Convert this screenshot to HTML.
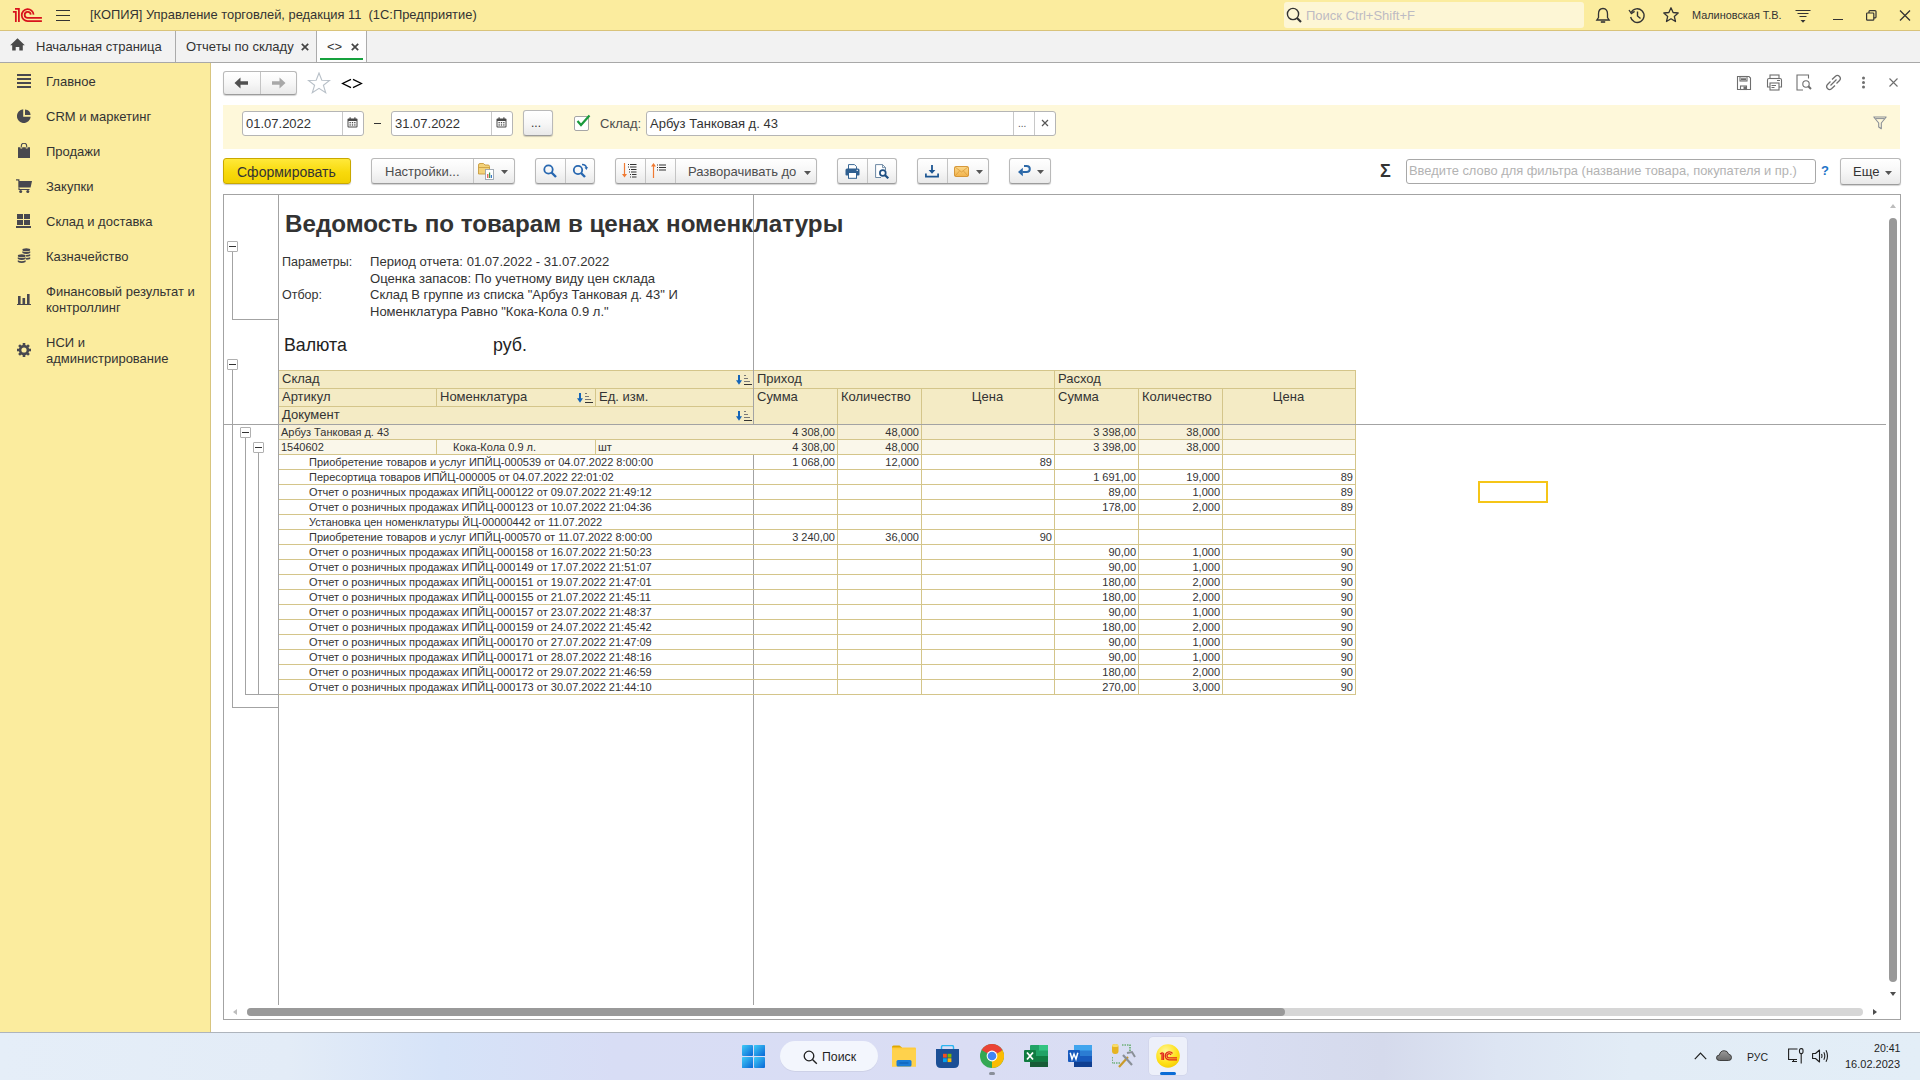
<!DOCTYPE html>
<html><head><meta charset="utf-8">
<style>
*{box-sizing:border-box;margin:0;padding:0}
html,body{width:1920px;height:1080px;overflow:hidden;background:#fff}
body{position:relative;font-family:"Liberation Sans",sans-serif;color:#333;font-size:13px}
.a{position:absolute}
.t{position:absolute;white-space:nowrap;line-height:1}

.btn{position:absolute;border:1px solid #B9B9B9;border-bottom-color:#9C9C9C;border-radius:3px;background:linear-gradient(#FFFFFF 0%,#F7F7F7 50%,#E9E9E9 100%);box-shadow:0 1px 1px rgba(0,0,0,0.18)}
.dv{position:absolute;width:1px;background:#C4C4C4}
.inp{position:absolute;border:1px solid #B5B5B5;border-radius:3px;background:#fff}
</style></head><body>

<!-- title bar -->
<div class="a" style="left:0;top:0;width:1920px;height:30px;background:#FBEC9E"></div>
<div class="a" style="left:0;top:30px;width:1920px;height:1px;background:#D9C37A"></div>
<!-- tabs bar -->
<div class="a" style="left:0;top:31px;width:1920px;height:31px;background:#F2F2F2"></div>
<div class="a" style="left:0;top:62px;width:1920px;height:1px;background:#A8A8A8"></div>
<!-- sidebar -->
<div class="a" style="left:0;top:63px;width:210px;height:969px;background:#FBEC9E"></div>
<div class="a" style="left:210px;top:63px;width:1px;height:969px;background:#D8C57F"></div>
<!-- taskbar -->
<div class="a" style="left:0;top:1032px;width:1920px;height:1px;background:#AEB4BC"></div>
<div class="a" style="left:0;top:1033px;width:1920px;height:47px;background:linear-gradient(90deg,#E5EEF8 0%,#E3ECF7 15%,#D6E3F8 23%,#D8DDF5 32%,#DADDF4 50%,#D9DEF3 63%,#D5DAEC 72%,#DDE5F3 78%,#E2ECF6 85%,#E3EEF7 100%)"></div>


<!-- title bar content -->
<svg class="a" style="left:8px;top:2px" width="40" height="26" viewBox="8 2 40 26"><g fill="none" stroke="#D8121C" stroke-width="1.75" stroke-linecap="butt"><path d="M12.9 11.95 H15.85 V22"/><path d="M15 8.75 H18.9 V22"/><path d="M33.6 14.6 A5.95 5.95 0 1 0 27.7 21.05 H41.9"/><path d="M30.75 14.6 A3.05 3.05 0 1 0 27.7 17.95 H41.9"/></g></svg>
<div class="a" style="left:56px;top:10px;width:14px;height:1.4px;background:#333"></div>
<div class="a" style="left:56px;top:15px;width:14px;height:1.4px;background:#333"></div>
<div class="a" style="left:56px;top:20px;width:14px;height:1.4px;background:#333"></div>
<div class="t" style="left:90px;top:9px;font-size:12.9px;color:#333">[КОПИЯ] Управление торговлей, редакция 11&nbsp; (1С:Предприятие)</div>
<div class="a" style="left:1284px;top:2px;width:300px;height:26px;background:#FDF6D5;border-radius:3px"></div>
<svg class="a" style="left:1286px;top:7px" width="17" height="17" viewBox="0 0 17 17"><circle cx="7" cy="7" r="5.6" fill="none" stroke="#333" stroke-width="1.4"/><path d="M11 11 L15 15" stroke="#333" stroke-width="2.2"/></svg>
<div class="t" style="left:1306px;top:9px;font-size:13px;color:#BDBBC3">Поиск Ctrl+Shift+F</div>
<svg class="a" style="left:1595px;top:7px" width="16" height="17" viewBox="0 0 16 17"><path d="M8 1.5 C4.8 1.5 3.5 4 3.5 7 V10.5 L1.8 13 H14.2 L12.5 10.5 V7 C12.5 4 11.2 1.5 8 1.5 Z" fill="none" stroke="#333" stroke-width="1.3"/><path d="M5.8 15 H10.2" stroke="#333" stroke-width="1.6"/></svg>
<svg class="a" style="left:1628px;top:7px" width="18" height="17" viewBox="0 0 18 17"><path d="M3.2 5.5 A6.8 6.8 0 1 1 2.6 10" fill="none" stroke="#333" stroke-width="1.4"/><path d="M1 3 L3.4 6.6 L6.6 4.4" fill="none" stroke="#333" stroke-width="1.3"/><path d="M9.5 4.5 V9 L12.5 11.5" fill="none" stroke="#333" stroke-width="1.4"/></svg>
<svg class="a" style="left:1662px;top:6px" width="18" height="18" viewBox="0 0 18 18"><path d="M9 1.8 L11.1 6.5 L16.2 7 L12.3 10.4 L13.5 15.5 L9 12.8 L4.5 15.5 L5.7 10.4 L1.8 7 L6.9 6.5 Z" fill="none" stroke="#333" stroke-width="1.3" stroke-linejoin="round"/></svg>
<div class="t" style="left:1692px;top:10px;font-size:10.9px;color:#333">Малиновская Т.В.</div>
<svg class="a" style="left:1795px;top:8px" width="16" height="16" viewBox="0 0 16 16"><path d="M0.5 2.5 H15.5 M2.5 5.5 H13.5 M4.5 8.5 H11.5" stroke="#333" stroke-width="1.2"/><path d="M5.5 12 H10.5 L8 14.8 Z" fill="#333"/></svg>
<div class="a" style="left:1833px;top:19px;width:10px;height:1.3px;background:#333"></div>
<svg class="a" style="left:1866px;top:10px" width="11" height="11" viewBox="0 0 11 11"><rect x="0.6" y="3" width="7.2" height="7.2" fill="none" stroke="#333" stroke-width="1.2" rx="0.8"/><path d="M3 3 V1.5 Q3 0.6 3.9 0.6 H9 Q10 0.6 10 1.6 V7 Q10 7.8 9.2 7.8 H7.8" fill="none" stroke="#333" stroke-width="1.2"/></svg>
<svg class="a" style="left:1899px;top:10px" width="12" height="11" viewBox="0 0 12 11"><path d="M1 0.5 L11 10.5 M11 0.5 L1 10.5" stroke="#333" stroke-width="1.3"/></svg>

<!-- tabs -->
<svg class="a" style="left:10px;top:38px" width="15" height="13" viewBox="0 0 15 13"><path d="M7.5 0.3 L14.8 7.2 H12.8 V12.6 H9.3 V9 H5.7 V12.6 H2.2 V7.2 H0.2 Z" fill="#4A4A4A"/></svg>
<div class="t" style="left:36px;top:40px;font-size:13px;color:#333">Начальная страница</div>
<div class="a" style="left:175px;top:31px;width:1px;height:31px;background:#ABABAB"></div>
<div class="t" style="left:186px;top:40px;font-size:13px;color:#333">Отчеты по складу</div>
<svg class="a" style="left:301px;top:43px" width="8" height="8" viewBox="0 0 8 8"><path d="M0.8 0.8 L7.2 7.2 M7.2 0.8 L0.8 7.2" stroke="#444" stroke-width="1.7"/></svg>
<div class="a" style="left:316px;top:31px;width:1px;height:31px;background:#ABABAB"></div>
<div class="a" style="left:317px;top:31px;width:49px;height:31px;background:#FDFDFD"></div>
<div class="t" style="left:327px;top:40px;font-size:13px;color:#333">&lt;&gt;</div>
<svg class="a" style="left:351px;top:43px" width="8" height="8" viewBox="0 0 8 8"><path d="M0.8 0.8 L7.2 7.2 M7.2 0.8 L0.8 7.2" stroke="#444" stroke-width="1.7"/></svg>
<div class="a" style="left:320px;top:58px;width:43px;height:2px;background:#14A03C"></div>
<div class="a" style="left:366px;top:31px;width:1px;height:31px;background:#ABABAB"></div>

<!-- sidebar -->
<div class="t" style="left:46px;top:75px;font-size:13px;color:#333">Главное</div>
<div class="t" style="left:46px;top:110px;font-size:13px;color:#333">CRM и маркетинг</div>
<div class="t" style="left:46px;top:145px;font-size:13px;color:#333">Продажи</div>
<div class="t" style="left:46px;top:180px;font-size:13px;color:#333">Закупки</div>
<div class="t" style="left:46px;top:215px;font-size:13px;color:#333">Склад и доставка</div>
<div class="t" style="left:46px;top:250px;font-size:13px;color:#333">Казначейство</div>
<div class="t" style="left:46px;top:284px;font-size:13px;color:#333;line-height:15.5px">Финансовый результат и<br>контроллинг</div>
<div class="t" style="left:46px;top:335px;font-size:13px;color:#333;line-height:15.5px">НСИ и<br>администрирование</div>


<!-- sidebar icons -->
<svg class="a" style="left:17px;top:74px" width="14" height="14" viewBox="0 0 14 14"><g fill="#48484F"><rect x="0" y="0" width="14" height="2"/><rect x="0" y="4" width="14" height="2"/><rect x="0" y="8" width="14" height="2"/><rect x="0" y="12" width="14" height="2"/></g></svg>
<svg class="a" style="left:17px;top:109px" width="14" height="14" viewBox="0 0 14 14"><path d="M6.2 0.3 V7.8 H13.7 A6.9 6.9 0 1 1 6.2 0.3 Z" fill="#48484F"/><path d="M8 0.4 A6 6 0 0 1 13.6 6 H8 Z" fill="#48484F"/></svg>
<svg class="a" style="left:18px;top:143px" width="12" height="15" viewBox="0 0 12 15"><path d="M3.3 4.5 V3 A2.7 2.7 0 0 1 8.7 3 V4.5" fill="none" stroke="#48484F" stroke-width="1.1"/><path d="M0 4.3 H2.4 V5.6 H4.2 V4.3 H7.8 V5.6 H9.6 V4.3 H12 V15 H0 Z" fill="#48484F"/></svg>
<svg class="a" style="left:16px;top:179px" width="16" height="14" viewBox="0 0 16 14"><path d="M0 0.8 H2.8 L2.8 2" stroke="#48484F" stroke-width="1.3" fill="none"/><path d="M2.3 2 H16 L14.6 8.5 H2.3 Z" fill="#48484F"/><path d="M3 8.5 V10.5 H13.5" stroke="#48484F" stroke-width="1.1" fill="none"/><circle cx="4.7" cy="12.4" r="1.5" fill="#48484F"/><circle cx="11.8" cy="12.4" r="1.5" fill="#48484F"/></svg>
<svg class="a" style="left:16px;top:214px" width="15" height="14" viewBox="0 0 15 14"><g fill="#48484F"><rect x="1" y="0" width="6" height="5"/><rect x="8" y="0" width="6" height="5"/><rect x="1" y="6" width="6" height="5"/><rect x="8" y="6" width="6" height="5"/><rect x="0" y="12" width="15" height="2"/></g></svg>
<svg class="a" style="left:17px;top:248px" width="14" height="16" viewBox="0 0 14 16"><g fill="#48484F"><ellipse cx="9.3" cy="1.8" rx="3.9" ry="1.5"/><path d="M5.4 3.2 Q9.3 5 13.2 3.2 V5 Q9.3 6.8 5.4 5 Z"/><path d="M9 7 Q11.5 7 13.2 6.2 V7.9 Q11.5 8.7 9.2 8.7 Z"/><path d="M9 10 Q11.5 10 13.2 9.2 V10.9 Q11.5 11.7 9.2 11.7 Z"/><ellipse cx="4.7" cy="7.8" rx="3.9" ry="1.5"/><path d="M0.8 9.2 Q4.7 11 8.6 9.2 V11 Q4.7 12.8 0.8 11 Z"/><path d="M0.8 12.3 Q4.7 14.1 8.6 12.3 V14 Q4.7 15.8 0.8 14 Z"/></g></svg>
<svg class="a" style="left:17px;top:294px" width="14" height="11" viewBox="0 0 14 11"><g fill="#48484F"><rect x="1" y="2" width="2.6" height="8"/><rect x="5.5" y="4" width="2.6" height="6"/><rect x="10" y="0" width="2.6" height="10"/><rect x="0" y="10" width="14" height="1"/></g></svg>
<svg class="a" style="left:17px;top:343px" width="14" height="14" viewBox="0 0 14 14"><g transform="translate(7 7)" fill="#48484F"><circle r="5.2"/><rect x="-1.3" y="-7" width="2.6" height="3"/><rect x="-1.3" y="-7" width="2.6" height="3" transform="rotate(45)"/><rect x="-1.3" y="-7" width="2.6" height="3" transform="rotate(90)"/><rect x="-1.3" y="-7" width="2.6" height="3" transform="rotate(135)"/><rect x="-1.3" y="-7" width="2.6" height="3" transform="rotate(180)"/><rect x="-1.3" y="-7" width="2.6" height="3" transform="rotate(225)"/><rect x="-1.3" y="-7" width="2.6" height="3" transform="rotate(270)"/><rect x="-1.3" y="-7" width="2.6" height="3" transform="rotate(315)"/><circle r="2.6" fill="#FBEC9E"/></g></svg>

<!-- main content -->


<!-- nav row -->
<div class="btn" style="left:223px;top:71px;width:74px;height:24px"></div>
<div class="dv" style="left:260px;top:72px;height:22px"></div>
<svg class="a" style="left:234px;top:77px" width="15" height="12" viewBox="0 0 15 12"><path d="M0.5 6 L6.5 0.5 V4.3 H14 V7.7 H6.5 V11.5 Z" fill="#505050"/></svg>
<svg class="a" style="left:271px;top:77px" width="15" height="12" viewBox="0 0 15 12"><path d="M14.5 6 L8.5 0.5 V4.3 H1 V7.7 H8.5 V11.5 Z" fill="#A8A8A8"/></svg>
<svg class="a" style="left:307px;top:72px" width="24" height="23" viewBox="0 0 24 23"><path d="M12 1 L14.8 8.2 L22.6 8.4 L16.4 13.2 L18.7 20.8 L12 16.4 L5.3 20.8 L7.6 13.2 L1.4 8.4 L9.2 8.2 Z" fill="none" stroke="#B8C0C8" stroke-width="1.1" stroke-linejoin="miter"/></svg>
<svg class="a" style="left:341px;top:78px" width="22" height="11" viewBox="0 0 22 11"><path d="M10 1.4 L1.6 5.5 L10 9.6 M12 1.4 L20.4 5.5 L12 9.6" fill="none" stroke="#000" stroke-width="1.3"/></svg>
<!-- right icons -->
<svg class="a" style="left:1736px;top:75px" width="16" height="16" viewBox="0 0 16 16"><g fill="none" stroke="#6E6E6E" stroke-width="1.1"><path d="M1.5 1.5 H13 L14.5 3 V14.5 H1.5 Z"/><rect x="4" y="1.5" width="7" height="4.5"/><path d="M5 3.2 H10 M5 4.6 H10"/><rect x="4.5" y="11" width="6" height="3.5"/></g><rect x="7.5" y="11.5" width="3" height="3" fill="#6E6E6E"/></svg>
<svg class="a" style="left:1766px;top:74px" width="17" height="17" viewBox="0 0 17 17"><g fill="none" stroke="#6E6E6E" stroke-width="1.1"><rect x="4" y="1" width="9" height="3.5"/><path d="M4 13 H1.5 V6 Q1.5 4.5 3 4.5 H14 Q15.5 4.5 15.5 6 V13 H13"/><rect x="4" y="9" width="9" height="7"/><path d="M5.5 11.5 H10 M5.5 13.5 H8.5 M11 6.5 H14"/></g></svg>
<svg class="a" style="left:1796px;top:74px" width="16" height="17" viewBox="0 0 16 17"><g fill="none" stroke="#6E6E6E" stroke-width="1.1"><path d="M12.5 4.5 V1 H1 V16 H7"/><circle cx="10" cy="10" r="3.2"/></g><path d="M12.3 12.3 L15 15" stroke="#6E6E6E" stroke-width="2"/></svg>
<svg class="a" style="left:1825px;top:74px" width="17" height="17" viewBox="0 0 17 17"><g fill="none" stroke="#6E6E6E" stroke-width="1.3"><path d="M7 5.5 L10.5 2.2 Q12.5 0.5 14.5 2.5 Q16.3 4.5 14.5 6.5 L11.5 9.5"/><path d="M10 11.5 L6.5 14.8 Q4.5 16.5 2.5 14.5 Q0.7 12.5 2.5 10.5 L5.5 7.5"/><path d="M5.5 11.5 L11.5 5.5"/></g></svg>
<svg class="a" style="left:1861px;top:76px" width="5" height="13" viewBox="0 0 5 13"><circle cx="2.5" cy="2" r="1.5" fill="#6E6E6E"/><circle cx="2.5" cy="6.5" r="1.5" fill="#6E6E6E"/><circle cx="2.5" cy="11" r="1.5" fill="#6E6E6E"/></svg>
<svg class="a" style="left:1889px;top:78px" width="9" height="9" viewBox="0 0 9 9"><path d="M0.5 0.5 L8.5 8.5 M8.5 0.5 L0.5 8.5" stroke="#6E6E6E" stroke-width="1.1"/></svg>

<!-- filter panel -->
<div class="a" style="left:223px;top:105px;width:1677px;height:44px;background:#FEF8DA"></div>
<div class="inp" style="left:242px;top:111px;width:122px;height:25px"></div>
<div class="a" style="left:342px;top:112px;width:1px;height:23px;background:#C8C8C8"></div>
<div class="t" style="left:246px;top:117px;font-size:13px;color:#333">01.07.2022</div>
<svg class="a" style="left:347px;top:117px" width="11" height="11" viewBox="0 0 11 11"><rect x="0.5" y="1.5" width="10" height="9" rx="1" fill="#4A4A4A"/><rect x="1.5" y="4" width="8" height="5.5" fill="#fff"/><g fill="#4A4A4A"><rect x="2.5" y="5" width="1.3" height="1.3"/><rect x="4.85" y="5" width="1.3" height="1.3"/><rect x="7.2" y="5" width="1.3" height="1.3"/><rect x="2.5" y="7.3" width="1.3" height="1.3"/><rect x="4.85" y="7.3" width="1.3" height="1.3"/><rect x="7.2" y="7.3" width="1.3" height="1.3"/></g><rect x="2.5" y="0.3" width="1.2" height="2.2" fill="#4A4A4A"/><rect x="7.3" y="0.3" width="1.2" height="2.2" fill="#4A4A4A"/></svg>
<div class="a" style="left:374px;top:123px;width:7px;height:1px;background:#333"></div>
<div class="inp" style="left:391px;top:111px;width:122px;height:25px"></div>
<div class="a" style="left:491px;top:112px;width:1px;height:23px;background:#C8C8C8"></div>
<div class="t" style="left:395px;top:117px;font-size:13px;color:#333">31.07.2022</div>
<svg class="a" style="left:496px;top:117px" width="11" height="11" viewBox="0 0 11 11"><rect x="0.5" y="1.5" width="10" height="9" rx="1" fill="#4A4A4A"/><rect x="1.5" y="4" width="8" height="5.5" fill="#fff"/><g fill="#4A4A4A"><rect x="2.5" y="5" width="1.3" height="1.3"/><rect x="4.85" y="5" width="1.3" height="1.3"/><rect x="7.2" y="5" width="1.3" height="1.3"/><rect x="2.5" y="7.3" width="1.3" height="1.3"/><rect x="4.85" y="7.3" width="1.3" height="1.3"/><rect x="7.2" y="7.3" width="1.3" height="1.3"/></g><rect x="2.5" y="0.3" width="1.2" height="2.2" fill="#4A4A4A"/><rect x="7.3" y="0.3" width="1.2" height="2.2" fill="#4A4A4A"/></svg>
<div class="btn" style="left:523px;top:110px;width:30px;height:26px"></div>
<div class="t" style="left:531px;top:117px;font-size:12px;color:#333">...</div>
<div class="a" style="left:574px;top:116px;width:15px;height:15px;border:1px solid #A6A6A6;border-radius:2px;background:#fff"></div>
<svg class="a" style="left:575px;top:114px" width="16" height="14" viewBox="0 0 16 14"><path d="M2.5 7 L6 11 L14.5 1.5" fill="none" stroke="#1A9A3C" stroke-width="2.2"/></svg>
<div class="t" style="left:600px;top:117px;font-size:13px;color:#4D4D4D">Склад:</div>
<div class="inp" style="left:646px;top:111px;width:410px;height:25px"></div>
<div class="a" style="left:1013px;top:112px;width:1px;height:23px;background:#C8C8C8"></div>
<div class="a" style="left:1034px;top:112px;width:1px;height:23px;background:#C8C8C8"></div>
<div class="t" style="left:650px;top:117px;font-size:13px;color:#333">Арбуз Танковая д. 43</div>
<div class="t" style="left:1018px;top:119px;font-size:10px;color:#555">...</div>
<svg class="a" style="left:1041px;top:119px" width="8" height="8" viewBox="0 0 8 8"><path d="M1 1 L7 7 M7 1 L1 7" stroke="#555" stroke-width="1.2"/></svg>
<svg class="a" style="left:1873px;top:116px" width="14" height="14" viewBox="0 0 14 14"><path d="M0.8 1 H13.2 L8.3 7 V12.8 L5.7 11 V7 Z" fill="none" stroke="#8A8F96" stroke-width="1.1" stroke-linejoin="round"/><path d="M2.5 2.6 H11.5" stroke="#8A8F96" stroke-width="1"/></svg>

<!-- command bar -->
<div class="a" style="left:223px;top:158px;width:128px;height:26px;border:1px solid #C9A800;border-radius:3px;background:linear-gradient(#FFE93A 0%,#F8DA0C 55%,#F1D000 100%);box-shadow:0 1px 1px rgba(0,0,0,0.2)"></div>
<div class="t" style="left:237px;top:165px;font-size:14px;color:#333">Сформировать</div>

<div class="btn" style="left:371px;top:158px;width:144px;height:26px"></div>
<div class="dv" style="left:473px;top:159px;height:24px"></div>
<div class="t" style="left:385px;top:165px;font-size:13px;color:#4D4D4D">Настройки...</div>
<svg class="a" style="left:478px;top:162px" width="18" height="18" viewBox="0 0 18 18"><path d="M0.5 3 Q0.5 1.5 2 1.5 H5.5 L7 3 H10 Q11.5 3 11.5 4.5 V12 H0.5 Z" fill="#F3D27A" stroke="#C89B3C" stroke-width="0.9"/><path d="M0.5 5.5 H11.5" stroke="#C89B3C" stroke-width="0.8"/><rect x="7.5" y="7.5" width="8" height="10" fill="#fff" stroke="#9AA3AD" stroke-width="0.9"/><rect x="9.2" y="12" width="1.2" height="4" fill="#E04A3C"/><rect x="11" y="10.5" width="1.2" height="5.5" fill="#3C9A50"/><rect x="12.8" y="13" width="1.2" height="3" fill="#3A78C8"/></svg>
<svg class="a" style="left:501px;top:170px" width="7" height="4" viewBox="0 0 7 4"><path d="M0 0 H7 L3.5 4 Z" fill="#555"/></svg>

<div class="btn" style="left:535px;top:158px;width:60px;height:26px"></div>
<div class="dv" style="left:565px;top:159px;height:24px"></div>
<svg class="a" style="left:543px;top:164px" width="14" height="14" viewBox="0 0 14 14"><circle cx="5.5" cy="5.5" r="4.2" fill="none" stroke="#2767B0" stroke-width="1.8"/><path d="M8.5 8.5 L13 13" stroke="#2767B0" stroke-width="2.4"/></svg>
<svg class="a" style="left:572px;top:163px" width="16" height="15" viewBox="0 0 16 15"><circle cx="6" cy="7" r="4.2" fill="none" stroke="#2767B0" stroke-width="1.8"/><path d="M9 10 L13 14" stroke="#2767B0" stroke-width="2.4"/><path d="M10 1.5 Q14 1.5 14.5 5" fill="none" stroke="#2767B0" stroke-width="1.4"/><path d="M12.5 4.5 L14.5 7 L16 4" fill="#2767B0"/></svg>

<div class="btn" style="left:615px;top:158px;width:202px;height:26px"></div>
<div class="dv" style="left:645px;top:159px;height:24px"></div>
<div class="dv" style="left:675px;top:159px;height:24px"></div>
<svg class="a" style="left:621px;top:162px" width="17" height="17" viewBox="0 0 17 17"><path d="M3.5 1 V14" stroke="#F07A32" stroke-width="1.2"/><path d="M1 12 L3.5 15.5 L6 12 Z" fill="#F07A32"/><g stroke="#333" stroke-width="1"><path d="M7 2.5 H8 M9 2.5 H15.5 M7 5 H8 M9 5 H15.5 M8 7.5 H9 M10 7.5 H15.5 M8 10 H9 M10 10 H15.5 M9 12.5 H10 M11 12.5 H15.5 M9 15 H10 M11 15 H15.5"/></g></svg>
<svg class="a" style="left:651px;top:162px" width="17" height="17" viewBox="0 0 17 17"><path d="M2.5 3 V16" stroke="#F07A32" stroke-width="1.2"/><path d="M0 4.5 L2.5 1 L5 4.5 Z" fill="#F07A32"/><g stroke="#333" stroke-width="1.1"><path d="M6 3 H7 M8 3 H15 M6 5.5 H7 M8 5.5 H15 M6 8 H7 M8 8 H15"/></g></svg>
<div class="t" style="left:688px;top:165px;font-size:13px;color:#4D4D4D">Разворачивать до</div>
<svg class="a" style="left:804px;top:171px" width="7" height="4" viewBox="0 0 7 4"><path d="M0 0 H7 L3.5 4 Z" fill="#555"/></svg>

<div class="btn" style="left:837px;top:158px;width:60px;height:26px"></div>
<div class="dv" style="left:867px;top:159px;height:24px"></div>
<svg class="a" style="left:845px;top:164px" width="15" height="15" viewBox="0 0 15 15"><path d="M3.5 5 V0.6 H9.5 L11.5 2.6 V5" fill="#fff" stroke="#3A6896" stroke-width="1"/><path d="M3 11.5 H1.5 Q0.5 11.5 0.5 10.5 V6 Q0.5 4.5 2 4.5 H13 Q14.5 4.5 14.5 6 V10.5 Q14.5 11.5 13.5 11.5 H12" fill="#2F5F90"/><rect x="3.5" y="8.5" width="8" height="5.8" fill="#fff" stroke="#2F5F90" stroke-width="1"/><rect x="11.5" y="5.8" width="1.5" height="1" fill="#fff"/></svg>
<svg class="a" style="left:875px;top:164px" width="15" height="15" viewBox="0 0 15 15"><path d="M6 13.5 H0.6 V0.6 H7.5 L10.5 3.6 V6" fill="#fff" stroke="#5B7A99" stroke-width="0.9"/><path d="M7.5 0.6 V3.6 H10.5" fill="none" stroke="#5B7A99" stroke-width="0.8"/><circle cx="7.8" cy="9" r="2.9" fill="#fff" stroke="#1F4F82" stroke-width="1.7"/><path d="M9.8 11 L13.3 14.3" stroke="#1F4F82" stroke-width="2.2"/></svg>

<div class="btn" style="left:917px;top:158px;width:72px;height:26px"></div>
<div class="dv" style="left:947px;top:159px;height:24px"></div>
<svg class="a" style="left:925px;top:165px" width="15" height="13" viewBox="0 0 15 13"><path d="M7 0 V6.5" stroke="#1B5592" stroke-width="1.8"/><path d="M3.6 5 H10.4 L7 8.8 Z" fill="#1B5592"/><path d="M0.9 8.5 V11.6 H13.1 V8.5" fill="none" stroke="#1B5592" stroke-width="1.7"/></svg>
<svg class="a" style="left:954px;top:166px" width="15" height="11" viewBox="0 0 15 11"><defs><linearGradient id="eg" x1="0" y1="0" x2="0" y2="1"><stop offset="0" stop-color="#FBD88A"/><stop offset="1" stop-color="#F2B24A"/></linearGradient></defs><rect x="0.5" y="0.5" width="14" height="10" rx="1.2" fill="url(#eg)" stroke="#D18E2C" stroke-width="0.9"/><path d="M1 1 L7.5 6 L14 1 M1 10 L5.5 5 M14 10 L9.5 5" fill="none" stroke="#D99A3A" stroke-width="0.8"/></svg>
<svg class="a" style="left:976px;top:170px" width="7" height="4" viewBox="0 0 7 4"><path d="M0 0 H7 L3.5 4 Z" fill="#555"/></svg>

<div class="btn" style="left:1009px;top:158px;width:42px;height:26px"></div>
<svg class="a" style="left:1018px;top:165px" width="13" height="12" viewBox="0 0 13 12"><path d="M4.5 7 H8.5 Q11.8 7 11.8 4 Q11.8 1 8.5 1 H6" fill="none" stroke="#2B68A8" stroke-width="2"/><path d="M0 7 L4.8 2.8 V11.2 Z" fill="#2B68A8"/></svg>
<svg class="a" style="left:1037px;top:170px" width="7" height="4" viewBox="0 0 7 4"><path d="M0 0 H7 L3.5 4 Z" fill="#555"/></svg>

<div class="t" style="left:1380px;top:162px;font-size:18px;color:#333;font-weight:bold">&Sigma;</div>
<div class="inp" style="left:1406px;top:159px;width:410px;height:25px;border-color:#A8A8A8"></div>
<div class="t" style="left:1409px;top:165px;font-size:12.9px;color:#B3B3B3">Введите слово для фильтра (название товара, покупателя и пр.)</div>
<div class="t" style="left:1821px;top:164px;font-size:13px;color:#1E74C8;font-weight:bold">?</div>
<div class="btn" style="left:1840px;top:158px;width:61px;height:27px"></div>
<div class="t" style="left:1853px;top:165px;font-size:13px;color:#333">Еще</div>
<svg class="a" style="left:1885px;top:171px" width="7" height="4" viewBox="0 0 7 4"><path d="M0 0 H7 L3.5 4 Z" fill="#555"/></svg>


<!-- taskbar content -->
<svg class="a" style="left:742px;top:1045px" width="23" height="23" viewBox="0 0 23 23"><defs><linearGradient id="wg" x1="0" y1="0" x2="1" y2="1"><stop offset="0" stop-color="#3FCBF7"/><stop offset="1" stop-color="#0866D6"/></linearGradient></defs><g fill="url(#wg)"><rect x="0" y="0" width="11" height="11" rx="1"/><rect x="12" y="0" width="11" height="11" rx="0.5"/><rect x="0" y="12" width="11" height="11" rx="0.5"/><rect x="12" y="12" width="11" height="11" rx="1"/></g></svg>
<div class="a" style="left:780px;top:1041px;width:98px;height:30px;border-radius:15px;background:#F3F6FD;box-shadow:0 1px 0 rgba(0,0,0,0.05)"></div>
<svg class="a" style="left:803px;top:1050px" width="15" height="15" viewBox="0 0 15 15"><circle cx="6" cy="6" r="4.8" fill="none" stroke="#1F1F1F" stroke-width="1.3"/><path d="M9.5 9.5 L13.8 13.8" stroke="#1F1F1F" stroke-width="1.4"/></svg>
<div class="t" style="left:822px;top:1051px;font-size:12.3px;color:#1F1F1F">Поиск</div>
<!-- folder -->
<svg class="a" style="left:892px;top:1045px" width="24" height="22" viewBox="0 0 24 22"><path d="M0 2 Q0 0.5 1.5 0.5 H7.5 L10 2.5 V5 H0 Z" fill="#E0A800"/><path d="M0 2.5 H23 Q24 2.5 24 3.5 V21.5 H0 Z" fill="#FFCB3D"/><path d="M0 4.5 H24 V21.5 H0 Z" fill="#FFD24C"/><rect x="4.5" y="15" width="15" height="6.5" rx="1.5" fill="#1A7BD6"/><rect x="7.5" y="17.5" width="9" height="1" fill="#0B5BB0"/></svg>
<!-- store -->
<svg class="a" style="left:936px;top:1045px" width="23" height="23" viewBox="0 0 23 23"><path d="M5.5 4.5 V2 Q5.5 0.5 7 0.5 H16 Q17.5 0.5 17.5 2 V4.5" fill="none" stroke="#2BB5F0" stroke-width="1.4"/><path d="M0 4 H23 V18 Q23 23 18 23 H5 Q0 23 0 18 Z" fill="#1B4F96"/><rect x="7" y="8.8" width="3.8" height="3.8" fill="#F25022"/><rect x="11.6" y="8.8" width="3.8" height="3.8" fill="#7FBA00"/><rect x="7" y="13.3" width="3.8" height="3.8" fill="#00A4EF"/><rect x="11.6" y="13.3" width="3.8" height="3.8" fill="#FFB900"/></svg>
<!-- chrome -->
<svg class="a" style="left:980px;top:1044px" width="24" height="24" viewBox="0 0 24 24"><circle cx="12" cy="12" r="12" fill="#34A853"/><path d="M12 12 L1.6 6 A12 12 0 0 1 22.4 6 Z" fill="#EA4335"/><path d="M12 12 L22.4 6 A12 12 0 0 1 12 24 Z" fill="#FBBC04"/><path d="M12 6.5 H22.4 L12 12 Z" fill="#EA4335"/><circle cx="12" cy="12" r="5.4" fill="#fff"/><circle cx="12" cy="12" r="4.3" fill="#4285F4"/></svg>
<div class="a" style="left:989px;top:1072px;width:6px;height:3px;border-radius:2px;background:#8A8F99"></div>
<!-- excel -->
<svg class="a" style="left:1024px;top:1045px" width="24" height="22" viewBox="0 0 24 22"><rect x="6" y="0" width="18" height="22" rx="1" fill="#21A366"/><rect x="15" y="0" width="9" height="5.5" fill="#33C481"/><rect x="6" y="11" width="18" height="5.5" fill="#107C41"/><rect x="6" y="16.5" width="18" height="5.5" fill="#185C37"/><rect x="0" y="5" width="12" height="12" rx="1" fill="#107C41"/><path d="M3 7.5 L9 14.5 M9 7.5 L3 14.5" stroke="#fff" stroke-width="1.8"/></svg>
<!-- word -->
<svg class="a" style="left:1068px;top:1045px" width="24" height="22" viewBox="0 0 24 22"><rect x="6" y="0" width="18" height="22" rx="1" fill="#2B7CD3"/><rect x="6" y="0" width="18" height="5.5" fill="#41A5EE"/><rect x="6" y="11" width="18" height="5.5" fill="#185ABD"/><rect x="6" y="16.5" width="18" height="5.5" fill="#103F91"/><rect x="0" y="5" width="12" height="12" rx="1" fill="#185ABD"/><path d="M2.2 7.8 L4 14.2 L6 9 L8 14.2 L9.8 7.8" fill="none" stroke="#fff" stroke-width="1.5"/></svg>
<!-- config tool -->
<svg class="a" style="left:1112px;top:1044px" width="25" height="25" viewBox="0 0 25 25"><rect x="0" y="0" width="6.5" height="10" rx="3" fill="#E6B422"/><ellipse cx="3.25" cy="1.6" rx="3.2" ry="1.5" fill="#F8DC6A"/><path d="M10 1 H18 V8 M0 13 V19 H8" fill="none" stroke="#3A9A3A" stroke-width="1.2" stroke-dasharray="1.5 1"/><path d="M7 23 L16 13" stroke="#C99A2A" stroke-width="2.2"/><path d="M11 11 L20 21" stroke="#8A9098" stroke-width="2.2"/><path d="M15 9 L20 8 L23 13" fill="none" stroke="#8A9098" stroke-width="2"/></svg>
<!-- 1C active -->
<div class="a" style="left:1149px;top:1037px;width:38px;height:38px;border-radius:4px;background:#EDF0FA;box-shadow:0 0 0 0.5px rgba(0,0,0,0.06)"></div>
<svg class="a" style="left:1156px;top:1044px" width="24" height="24" viewBox="0 0 24 24"><defs><radialGradient id="yg" cx="0.4" cy="0.3" r="0.8"><stop offset="0" stop-color="#FFF79A"/><stop offset="0.6" stop-color="#FFE21A"/><stop offset="1" stop-color="#F2C800"/></radialGradient></defs><circle cx="12" cy="12" r="11.8" fill="url(#yg)"/><g fill="none" stroke="#E0261C" stroke-width="1.3"><path d="M4 10 L6 8.8 V16 M7.5 8.8 V16"/><path d="M21 15.8 H13.5 A4 4 0 1 1 16.5 9.5"/><path d="M21 13.9 H13.5 A2.1 2.1 0 1 1 15 10.9"/></g></svg>
<div class="a" style="left:1160px;top:1072px;width:16px;height:3px;border-radius:2px;background:#0A6CD6"></div>
<!-- tray -->
<svg class="a" style="left:1694px;top:1052px" width="13" height="8" viewBox="0 0 13 8"><path d="M0.8 7.2 L6.5 1.2 L12.2 7.2" fill="none" stroke="#1F1F1F" stroke-width="1.2"/></svg>
<svg class="a" style="left:1716px;top:1050px" width="16" height="11" viewBox="0 0 16 11"><defs><linearGradient id="cg" x1="0" y1="0" x2="0" y2="1"><stop offset="0" stop-color="#9A9A9A"/><stop offset="1" stop-color="#6A6A6A"/></linearGradient></defs><path d="M3.5 10.5 Q0.5 10.5 0.5 7.8 Q0.5 5.2 3.4 5 Q4.2 0.7 8.3 0.7 Q11.6 0.7 12.6 4.2 Q15.5 4.6 15.5 7.5 Q15.5 10.5 12.5 10.5 Z" fill="url(#cg)" stroke="#333" stroke-width="0.9"/></svg>
<div class="t" style="left:1747px;top:1052px;font-size:10.5px;color:#1F1F1F">РУС</div>
<svg class="a" style="left:1788px;top:1048px" width="16" height="16" viewBox="0 0 16 16"><path d="M9.5 1 H0.6 V11.5 H9" fill="none" stroke="#1F1F1F" stroke-width="1.1"/><path d="M4 13.5 H9 M5.5 11.5 V13.5" stroke="#1F1F1F" stroke-width="1.1"/><rect x="11.5" y="0.6" width="3.5" height="5" rx="1.5" fill="none" stroke="#1F1F1F" stroke-width="1.1"/><path d="M13.2 5.6 V15.5" stroke="#1F1F1F" stroke-width="1.1"/></svg>
<svg class="a" style="left:1812px;top:1049px" width="17" height="14" viewBox="0 0 17 14"><path d="M0.6 4.5 H3.5 L7.5 1 V13 L3.5 9.5 H0.6 Z" fill="none" stroke="#1F1F1F" stroke-width="1.1" stroke-linejoin="round"/><path d="M9.5 5 Q10.5 7 9.5 9 M11.8 3.2 Q13.8 7 11.8 10.8 M14 1.2 Q17 7 14 12.8" fill="none" stroke="#1F1F1F" stroke-width="1.1"/></svg>
<div class="t" style="left:1874px;top:1043px;font-size:10.6px;color:#1F1F1F">20:41</div>
<div class="t" style="left:1845px;top:1059px;font-size:11px;color:#1F1F1F">16.02.2023</div>

<!-- REPORT START -->
<div class="a" style="left:223px;top:194px;width:1678px;height:1px;background:#A3A3A3"></div>
<div class="a" style="left:223px;top:1019px;width:1678px;height:1px;background:#A3A3A3"></div>
<div class="a" style="left:223px;top:194px;width:1px;height:826px;background:#A3A3A3"></div>
<div class="a" style="left:1900px;top:194px;width:1px;height:826px;background:#A3A3A3"></div>
<div class="a" style="left:278px;top:195px;width:1px;height:810px;background:#A3A3A3"></div>
<div class="a" style="left:753px;top:195px;width:1px;height:810px;background:#A3A3A3"></div>
<div class="t" style="left:285px;top:212px;font-size:24.2px;color:#333;font-weight:bold">Ведомость по товарам в ценах номенклатуры</div>
<div class="t" style="left:282px;top:256px;font-size:12.5px;color:#333;">Параметры:</div>
<div class="t" style="left:370px;top:255px;font-size:13.1px;color:#333;">Период отчета: 01.07.2022 - 31.07.2022</div>
<div class="t" style="left:370px;top:272px;font-size:13.1px;color:#333;">Оценка запасов: По учетному виду цен склада</div>
<div class="t" style="left:282px;top:289px;font-size:12.5px;color:#333;">Отбор:</div>
<div class="t" style="left:370px;top:288px;font-size:13px;color:#333;">Склад В группе из списка "Арбуз Танковая д. 43" И</div>
<div class="t" style="left:370px;top:305px;font-size:13px;color:#333;">Номенклатура Равно "Кока-Кола 0.9 л."</div>
<div class="t" style="left:284px;top:337px;font-size:17.8px;color:#222;">Валюта</div>
<div class="t" style="left:493px;top:337px;font-size:17.8px;color:#222;">руб.</div>
<div class="a" style="left:279px;top:370px;width:1076px;height:54px;background:#F4EBC5"></div>
<div class="a" style="left:279px;top:370px;width:1077px;height:1px;background:#D4C58A"></div>
<div class="a" style="left:279px;top:388px;width:1077px;height:1px;background:#D4C58A"></div>
<div class="a" style="left:279px;top:406px;width:474px;height:1px;background:#D4C58A"></div>
<div class="a" style="left:436px;top:389px;width:1px;height:17px;background:#D4C58A"></div>
<div class="a" style="left:595px;top:389px;width:1px;height:17px;background:#D4C58A"></div>
<div class="a" style="left:837px;top:389px;width:1px;height:35px;background:#D4C58A"></div>
<div class="a" style="left:921px;top:389px;width:1px;height:35px;background:#D4C58A"></div>
<div class="a" style="left:1138px;top:389px;width:1px;height:35px;background:#D4C58A"></div>
<div class="a" style="left:1222px;top:389px;width:1px;height:35px;background:#D4C58A"></div>
<div class="a" style="left:1054px;top:371px;width:1px;height:53px;background:#D4C58A"></div>
<div class="a" style="left:1355px;top:370px;width:1px;height:325px;background:#D4C58A"></div>
<div class="t" style="left:282px;top:372px;font-size:13px;color:#333;">Склад</div>
<div class="t" style="left:757px;top:372px;font-size:13px;color:#333;">Приход</div>
<div class="t" style="left:1058px;top:372px;font-size:13px;color:#333;">Расход</div>
<div class="t" style="left:282px;top:390px;font-size:13px;color:#333;">Артикул</div>
<div class="t" style="left:440px;top:390px;font-size:13px;color:#333;">Номенклатура</div>
<div class="t" style="left:599px;top:390px;font-size:13px;color:#333;">Ед. изм.</div>
<div class="t" style="left:757px;top:390px;font-size:13px;color:#333;">Сумма</div>
<div class="t" style="left:841px;top:390px;font-size:13px;color:#333;">Количество</div>
<div class="t" style="left:921px;top:390px;width:133px;text-align:center;font-size:13px;color:#333">Цена</div>
<div class="t" style="left:1058px;top:390px;font-size:13px;color:#333;">Сумма</div>
<div class="t" style="left:1142px;top:390px;font-size:13px;color:#333;">Количество</div>
<div class="t" style="left:1222px;top:390px;width:133px;text-align:center;font-size:13px;color:#333">Цена</div>
<div class="t" style="left:282px;top:408px;font-size:13px;color:#333;">Документ</div>
<svg class="a" style="left:736px;top:375px" width="17" height="11" viewBox="0 0 17 11"><rect x="2" y="0" width="2" height="6" fill="#1565B8"/><path d="M0 5.2 H6 L3 9.8 Z" fill="#1565B8"/><path d="M8 0.5 H10 M8 3.5 H12 M8 6.5 H14" stroke="#777" stroke-width="1"/><path d="M8 9.5 H16" stroke="#333" stroke-width="1"/></svg>
<svg class="a" style="left:577px;top:393px" width="17" height="11" viewBox="0 0 17 11"><rect x="2" y="0" width="2" height="6" fill="#1565B8"/><path d="M0 5.2 H6 L3 9.8 Z" fill="#1565B8"/><path d="M8 0.5 H10 M8 3.5 H12 M8 6.5 H14" stroke="#777" stroke-width="1"/><path d="M8 9.5 H16" stroke="#333" stroke-width="1"/></svg>
<svg class="a" style="left:736px;top:411px" width="17" height="11" viewBox="0 0 17 11"><rect x="2" y="0" width="2" height="6" fill="#1565B8"/><path d="M0 5.2 H6 L3 9.8 Z" fill="#1565B8"/><path d="M8 0.5 H10 M8 3.5 H12 M8 6.5 H14" stroke="#777" stroke-width="1"/><path d="M8 9.5 H16" stroke="#333" stroke-width="1"/></svg>
<div class="a" style="left:753px;top:370px;width:1px;height:55px;background:#A3A3A3"></div>
<div class="a" style="left:224px;top:424px;width:1662px;height:1px;background:#A3A3A3"></div>
<div class="a" style="left:279px;top:425px;width:1076px;height:14px;background:#F7F0D8"></div>
<div class="a" style="left:279px;top:439px;width:1077px;height:1px;background:#D4C58A"></div>
<div class="a" style="left:837px;top:425px;width:1px;height:14px;background:#D4C58A"></div>
<div class="a" style="left:921px;top:425px;width:1px;height:14px;background:#D4C58A"></div>
<div class="a" style="left:1054px;top:425px;width:1px;height:14px;background:#D4C58A"></div>
<div class="a" style="left:1138px;top:425px;width:1px;height:14px;background:#D4C58A"></div>
<div class="a" style="left:1222px;top:425px;width:1px;height:14px;background:#D4C58A"></div>
<div class="t" style="left:281px;top:427px;font-size:11px;color:#333;">Арбуз Танковая д. 43</div>
<div class="t" style="left:635px;top:427px;width:200px;text-align:right;font-size:11px;color:#333">4 308,00</div>
<div class="t" style="left:719px;top:427px;width:200px;text-align:right;font-size:11px;color:#333">48,000</div>
<div class="t" style="left:936px;top:427px;width:200px;text-align:right;font-size:11px;color:#333">3 398,00</div>
<div class="t" style="left:1020px;top:427px;width:200px;text-align:right;font-size:11px;color:#333">38,000</div>
<div class="a" style="left:279px;top:440px;width:1076px;height:14px;background:#FAF7EA"></div>
<div class="a" style="left:279px;top:454px;width:1077px;height:1px;background:#D4C58A"></div>
<div class="a" style="left:837px;top:440px;width:1px;height:14px;background:#D4C58A"></div>
<div class="a" style="left:921px;top:440px;width:1px;height:14px;background:#D4C58A"></div>
<div class="a" style="left:1054px;top:440px;width:1px;height:14px;background:#D4C58A"></div>
<div class="a" style="left:1138px;top:440px;width:1px;height:14px;background:#D4C58A"></div>
<div class="a" style="left:1222px;top:440px;width:1px;height:14px;background:#D4C58A"></div>
<div class="a" style="left:436px;top:440px;width:1px;height:14px;background:#D4C58A"></div>
<div class="a" style="left:595px;top:440px;width:1px;height:14px;background:#D4C58A"></div>
<div class="t" style="left:281px;top:442px;font-size:11px;color:#333;">1540602</div>
<div class="t" style="left:453px;top:442px;font-size:11px;color:#333;">Кока-Кола 0.9 л.</div>
<div class="t" style="left:598px;top:442px;font-size:11px;color:#333;">шт</div>
<div class="t" style="left:635px;top:442px;width:200px;text-align:right;font-size:11px;color:#333">4 308,00</div>
<div class="t" style="left:719px;top:442px;width:200px;text-align:right;font-size:11px;color:#333">48,000</div>
<div class="t" style="left:936px;top:442px;width:200px;text-align:right;font-size:11px;color:#333">3 398,00</div>
<div class="t" style="left:1020px;top:442px;width:200px;text-align:right;font-size:11px;color:#333">38,000</div>
<div class="a" style="left:279px;top:469px;width:1077px;height:1px;background:#D4C58A"></div>
<div class="a" style="left:837px;top:455px;width:1px;height:14px;background:#D4C58A"></div>
<div class="a" style="left:921px;top:455px;width:1px;height:14px;background:#D4C58A"></div>
<div class="a" style="left:1054px;top:455px;width:1px;height:14px;background:#D4C58A"></div>
<div class="a" style="left:1138px;top:455px;width:1px;height:14px;background:#D4C58A"></div>
<div class="a" style="left:1222px;top:455px;width:1px;height:14px;background:#D4C58A"></div>
<div class="t" style="left:309px;top:457px;font-size:11px;color:#333;">Приобретение товаров и услуг ИПЙЦ-000539 от 04.07.2022 8:00:00</div>
<div class="t" style="left:635px;top:457px;width:200px;text-align:right;font-size:11px;color:#333">1 068,00</div>
<div class="t" style="left:719px;top:457px;width:200px;text-align:right;font-size:11px;color:#333">12,000</div>
<div class="t" style="left:852px;top:457px;width:200px;text-align:right;font-size:11px;color:#333">89</div>
<div class="a" style="left:279px;top:484px;width:1077px;height:1px;background:#D4C58A"></div>
<div class="a" style="left:837px;top:470px;width:1px;height:14px;background:#D4C58A"></div>
<div class="a" style="left:921px;top:470px;width:1px;height:14px;background:#D4C58A"></div>
<div class="a" style="left:1054px;top:470px;width:1px;height:14px;background:#D4C58A"></div>
<div class="a" style="left:1138px;top:470px;width:1px;height:14px;background:#D4C58A"></div>
<div class="a" style="left:1222px;top:470px;width:1px;height:14px;background:#D4C58A"></div>
<div class="t" style="left:309px;top:472px;font-size:11px;color:#333;">Пересортица товаров ИПЙЦ-000005 от 04.07.2022 22:01:02</div>
<div class="t" style="left:936px;top:472px;width:200px;text-align:right;font-size:11px;color:#333">1 691,00</div>
<div class="t" style="left:1020px;top:472px;width:200px;text-align:right;font-size:11px;color:#333">19,000</div>
<div class="t" style="left:1153px;top:472px;width:200px;text-align:right;font-size:11px;color:#333">89</div>
<div class="a" style="left:279px;top:499px;width:1077px;height:1px;background:#D4C58A"></div>
<div class="a" style="left:837px;top:485px;width:1px;height:14px;background:#D4C58A"></div>
<div class="a" style="left:921px;top:485px;width:1px;height:14px;background:#D4C58A"></div>
<div class="a" style="left:1054px;top:485px;width:1px;height:14px;background:#D4C58A"></div>
<div class="a" style="left:1138px;top:485px;width:1px;height:14px;background:#D4C58A"></div>
<div class="a" style="left:1222px;top:485px;width:1px;height:14px;background:#D4C58A"></div>
<div class="t" style="left:309px;top:487px;font-size:11px;color:#333;">Отчет о розничных продажах ИПЙЦ-000122 от 09.07.2022 21:49:12</div>
<div class="t" style="left:936px;top:487px;width:200px;text-align:right;font-size:11px;color:#333">89,00</div>
<div class="t" style="left:1020px;top:487px;width:200px;text-align:right;font-size:11px;color:#333">1,000</div>
<div class="t" style="left:1153px;top:487px;width:200px;text-align:right;font-size:11px;color:#333">89</div>
<div class="a" style="left:279px;top:514px;width:1077px;height:1px;background:#D4C58A"></div>
<div class="a" style="left:837px;top:500px;width:1px;height:14px;background:#D4C58A"></div>
<div class="a" style="left:921px;top:500px;width:1px;height:14px;background:#D4C58A"></div>
<div class="a" style="left:1054px;top:500px;width:1px;height:14px;background:#D4C58A"></div>
<div class="a" style="left:1138px;top:500px;width:1px;height:14px;background:#D4C58A"></div>
<div class="a" style="left:1222px;top:500px;width:1px;height:14px;background:#D4C58A"></div>
<div class="t" style="left:309px;top:502px;font-size:11px;color:#333;">Отчет о розничных продажах ИПЙЦ-000123 от 10.07.2022 21:04:36</div>
<div class="t" style="left:936px;top:502px;width:200px;text-align:right;font-size:11px;color:#333">178,00</div>
<div class="t" style="left:1020px;top:502px;width:200px;text-align:right;font-size:11px;color:#333">2,000</div>
<div class="t" style="left:1153px;top:502px;width:200px;text-align:right;font-size:11px;color:#333">89</div>
<div class="a" style="left:279px;top:529px;width:1077px;height:1px;background:#D4C58A"></div>
<div class="a" style="left:837px;top:515px;width:1px;height:14px;background:#D4C58A"></div>
<div class="a" style="left:921px;top:515px;width:1px;height:14px;background:#D4C58A"></div>
<div class="a" style="left:1054px;top:515px;width:1px;height:14px;background:#D4C58A"></div>
<div class="a" style="left:1138px;top:515px;width:1px;height:14px;background:#D4C58A"></div>
<div class="a" style="left:1222px;top:515px;width:1px;height:14px;background:#D4C58A"></div>
<div class="t" style="left:309px;top:517px;font-size:11px;color:#333;">Установка цен номенклатуры ЙЦ-00000442 от 11.07.2022</div>
<div class="a" style="left:279px;top:544px;width:1077px;height:1px;background:#D4C58A"></div>
<div class="a" style="left:837px;top:530px;width:1px;height:14px;background:#D4C58A"></div>
<div class="a" style="left:921px;top:530px;width:1px;height:14px;background:#D4C58A"></div>
<div class="a" style="left:1054px;top:530px;width:1px;height:14px;background:#D4C58A"></div>
<div class="a" style="left:1138px;top:530px;width:1px;height:14px;background:#D4C58A"></div>
<div class="a" style="left:1222px;top:530px;width:1px;height:14px;background:#D4C58A"></div>
<div class="t" style="left:309px;top:532px;font-size:11px;color:#333;">Приобретение товаров и услуг ИПЙЦ-000570 от 11.07.2022 8:00:00</div>
<div class="t" style="left:635px;top:532px;width:200px;text-align:right;font-size:11px;color:#333">3 240,00</div>
<div class="t" style="left:719px;top:532px;width:200px;text-align:right;font-size:11px;color:#333">36,000</div>
<div class="t" style="left:852px;top:532px;width:200px;text-align:right;font-size:11px;color:#333">90</div>
<div class="a" style="left:279px;top:559px;width:1077px;height:1px;background:#D4C58A"></div>
<div class="a" style="left:837px;top:545px;width:1px;height:14px;background:#D4C58A"></div>
<div class="a" style="left:921px;top:545px;width:1px;height:14px;background:#D4C58A"></div>
<div class="a" style="left:1054px;top:545px;width:1px;height:14px;background:#D4C58A"></div>
<div class="a" style="left:1138px;top:545px;width:1px;height:14px;background:#D4C58A"></div>
<div class="a" style="left:1222px;top:545px;width:1px;height:14px;background:#D4C58A"></div>
<div class="t" style="left:309px;top:547px;font-size:11px;color:#333;">Отчет о розничных продажах ИПЙЦ-000158 от 16.07.2022 21:50:23</div>
<div class="t" style="left:936px;top:547px;width:200px;text-align:right;font-size:11px;color:#333">90,00</div>
<div class="t" style="left:1020px;top:547px;width:200px;text-align:right;font-size:11px;color:#333">1,000</div>
<div class="t" style="left:1153px;top:547px;width:200px;text-align:right;font-size:11px;color:#333">90</div>
<div class="a" style="left:279px;top:574px;width:1077px;height:1px;background:#D4C58A"></div>
<div class="a" style="left:837px;top:560px;width:1px;height:14px;background:#D4C58A"></div>
<div class="a" style="left:921px;top:560px;width:1px;height:14px;background:#D4C58A"></div>
<div class="a" style="left:1054px;top:560px;width:1px;height:14px;background:#D4C58A"></div>
<div class="a" style="left:1138px;top:560px;width:1px;height:14px;background:#D4C58A"></div>
<div class="a" style="left:1222px;top:560px;width:1px;height:14px;background:#D4C58A"></div>
<div class="t" style="left:309px;top:562px;font-size:11px;color:#333;">Отчет о розничных продажах ИПЙЦ-000149 от 17.07.2022 21:51:07</div>
<div class="t" style="left:936px;top:562px;width:200px;text-align:right;font-size:11px;color:#333">90,00</div>
<div class="t" style="left:1020px;top:562px;width:200px;text-align:right;font-size:11px;color:#333">1,000</div>
<div class="t" style="left:1153px;top:562px;width:200px;text-align:right;font-size:11px;color:#333">90</div>
<div class="a" style="left:279px;top:589px;width:1077px;height:1px;background:#D4C58A"></div>
<div class="a" style="left:837px;top:575px;width:1px;height:14px;background:#D4C58A"></div>
<div class="a" style="left:921px;top:575px;width:1px;height:14px;background:#D4C58A"></div>
<div class="a" style="left:1054px;top:575px;width:1px;height:14px;background:#D4C58A"></div>
<div class="a" style="left:1138px;top:575px;width:1px;height:14px;background:#D4C58A"></div>
<div class="a" style="left:1222px;top:575px;width:1px;height:14px;background:#D4C58A"></div>
<div class="t" style="left:309px;top:577px;font-size:11px;color:#333;">Отчет о розничных продажах ИПЙЦ-000151 от 19.07.2022 21:47:01</div>
<div class="t" style="left:936px;top:577px;width:200px;text-align:right;font-size:11px;color:#333">180,00</div>
<div class="t" style="left:1020px;top:577px;width:200px;text-align:right;font-size:11px;color:#333">2,000</div>
<div class="t" style="left:1153px;top:577px;width:200px;text-align:right;font-size:11px;color:#333">90</div>
<div class="a" style="left:279px;top:604px;width:1077px;height:1px;background:#D4C58A"></div>
<div class="a" style="left:837px;top:590px;width:1px;height:14px;background:#D4C58A"></div>
<div class="a" style="left:921px;top:590px;width:1px;height:14px;background:#D4C58A"></div>
<div class="a" style="left:1054px;top:590px;width:1px;height:14px;background:#D4C58A"></div>
<div class="a" style="left:1138px;top:590px;width:1px;height:14px;background:#D4C58A"></div>
<div class="a" style="left:1222px;top:590px;width:1px;height:14px;background:#D4C58A"></div>
<div class="t" style="left:309px;top:592px;font-size:11px;color:#333;">Отчет о розничных продажах ИПЙЦ-000155 от 21.07.2022 21:45:11</div>
<div class="t" style="left:936px;top:592px;width:200px;text-align:right;font-size:11px;color:#333">180,00</div>
<div class="t" style="left:1020px;top:592px;width:200px;text-align:right;font-size:11px;color:#333">2,000</div>
<div class="t" style="left:1153px;top:592px;width:200px;text-align:right;font-size:11px;color:#333">90</div>
<div class="a" style="left:279px;top:619px;width:1077px;height:1px;background:#D4C58A"></div>
<div class="a" style="left:837px;top:605px;width:1px;height:14px;background:#D4C58A"></div>
<div class="a" style="left:921px;top:605px;width:1px;height:14px;background:#D4C58A"></div>
<div class="a" style="left:1054px;top:605px;width:1px;height:14px;background:#D4C58A"></div>
<div class="a" style="left:1138px;top:605px;width:1px;height:14px;background:#D4C58A"></div>
<div class="a" style="left:1222px;top:605px;width:1px;height:14px;background:#D4C58A"></div>
<div class="t" style="left:309px;top:607px;font-size:11px;color:#333;">Отчет о розничных продажах ИПЙЦ-000157 от 23.07.2022 21:48:37</div>
<div class="t" style="left:936px;top:607px;width:200px;text-align:right;font-size:11px;color:#333">90,00</div>
<div class="t" style="left:1020px;top:607px;width:200px;text-align:right;font-size:11px;color:#333">1,000</div>
<div class="t" style="left:1153px;top:607px;width:200px;text-align:right;font-size:11px;color:#333">90</div>
<div class="a" style="left:279px;top:634px;width:1077px;height:1px;background:#D4C58A"></div>
<div class="a" style="left:837px;top:620px;width:1px;height:14px;background:#D4C58A"></div>
<div class="a" style="left:921px;top:620px;width:1px;height:14px;background:#D4C58A"></div>
<div class="a" style="left:1054px;top:620px;width:1px;height:14px;background:#D4C58A"></div>
<div class="a" style="left:1138px;top:620px;width:1px;height:14px;background:#D4C58A"></div>
<div class="a" style="left:1222px;top:620px;width:1px;height:14px;background:#D4C58A"></div>
<div class="t" style="left:309px;top:622px;font-size:11px;color:#333;">Отчет о розничных продажах ИПЙЦ-000159 от 24.07.2022 21:45:42</div>
<div class="t" style="left:936px;top:622px;width:200px;text-align:right;font-size:11px;color:#333">180,00</div>
<div class="t" style="left:1020px;top:622px;width:200px;text-align:right;font-size:11px;color:#333">2,000</div>
<div class="t" style="left:1153px;top:622px;width:200px;text-align:right;font-size:11px;color:#333">90</div>
<div class="a" style="left:279px;top:649px;width:1077px;height:1px;background:#D4C58A"></div>
<div class="a" style="left:837px;top:635px;width:1px;height:14px;background:#D4C58A"></div>
<div class="a" style="left:921px;top:635px;width:1px;height:14px;background:#D4C58A"></div>
<div class="a" style="left:1054px;top:635px;width:1px;height:14px;background:#D4C58A"></div>
<div class="a" style="left:1138px;top:635px;width:1px;height:14px;background:#D4C58A"></div>
<div class="a" style="left:1222px;top:635px;width:1px;height:14px;background:#D4C58A"></div>
<div class="t" style="left:309px;top:637px;font-size:11px;color:#333;">Отчет о розничных продажах ИПЙЦ-000170 от 27.07.2022 21:47:09</div>
<div class="t" style="left:936px;top:637px;width:200px;text-align:right;font-size:11px;color:#333">90,00</div>
<div class="t" style="left:1020px;top:637px;width:200px;text-align:right;font-size:11px;color:#333">1,000</div>
<div class="t" style="left:1153px;top:637px;width:200px;text-align:right;font-size:11px;color:#333">90</div>
<div class="a" style="left:279px;top:664px;width:1077px;height:1px;background:#D4C58A"></div>
<div class="a" style="left:837px;top:650px;width:1px;height:14px;background:#D4C58A"></div>
<div class="a" style="left:921px;top:650px;width:1px;height:14px;background:#D4C58A"></div>
<div class="a" style="left:1054px;top:650px;width:1px;height:14px;background:#D4C58A"></div>
<div class="a" style="left:1138px;top:650px;width:1px;height:14px;background:#D4C58A"></div>
<div class="a" style="left:1222px;top:650px;width:1px;height:14px;background:#D4C58A"></div>
<div class="t" style="left:309px;top:652px;font-size:11px;color:#333;">Отчет о розничных продажах ИПЙЦ-000171 от 28.07.2022 21:48:16</div>
<div class="t" style="left:936px;top:652px;width:200px;text-align:right;font-size:11px;color:#333">90,00</div>
<div class="t" style="left:1020px;top:652px;width:200px;text-align:right;font-size:11px;color:#333">1,000</div>
<div class="t" style="left:1153px;top:652px;width:200px;text-align:right;font-size:11px;color:#333">90</div>
<div class="a" style="left:279px;top:679px;width:1077px;height:1px;background:#D4C58A"></div>
<div class="a" style="left:837px;top:665px;width:1px;height:14px;background:#D4C58A"></div>
<div class="a" style="left:921px;top:665px;width:1px;height:14px;background:#D4C58A"></div>
<div class="a" style="left:1054px;top:665px;width:1px;height:14px;background:#D4C58A"></div>
<div class="a" style="left:1138px;top:665px;width:1px;height:14px;background:#D4C58A"></div>
<div class="a" style="left:1222px;top:665px;width:1px;height:14px;background:#D4C58A"></div>
<div class="t" style="left:309px;top:667px;font-size:11px;color:#333;">Отчет о розничных продажах ИПЙЦ-000172 от 29.07.2022 21:46:59</div>
<div class="t" style="left:936px;top:667px;width:200px;text-align:right;font-size:11px;color:#333">180,00</div>
<div class="t" style="left:1020px;top:667px;width:200px;text-align:right;font-size:11px;color:#333">2,000</div>
<div class="t" style="left:1153px;top:667px;width:200px;text-align:right;font-size:11px;color:#333">90</div>
<div class="a" style="left:279px;top:694px;width:1077px;height:1px;background:#D4C58A"></div>
<div class="a" style="left:837px;top:680px;width:1px;height:14px;background:#D4C58A"></div>
<div class="a" style="left:921px;top:680px;width:1px;height:14px;background:#D4C58A"></div>
<div class="a" style="left:1054px;top:680px;width:1px;height:14px;background:#D4C58A"></div>
<div class="a" style="left:1138px;top:680px;width:1px;height:14px;background:#D4C58A"></div>
<div class="a" style="left:1222px;top:680px;width:1px;height:14px;background:#D4C58A"></div>
<div class="t" style="left:309px;top:682px;font-size:11px;color:#333;">Отчет о розничных продажах ИПЙЦ-000173 от 30.07.2022 21:44:10</div>
<div class="t" style="left:936px;top:682px;width:200px;text-align:right;font-size:11px;color:#333">270,00</div>
<div class="t" style="left:1020px;top:682px;width:200px;text-align:right;font-size:11px;color:#333">3,000</div>
<div class="t" style="left:1153px;top:682px;width:200px;text-align:right;font-size:11px;color:#333">90</div>
<div class="a" style="left:232px;top:252px;width:1px;height:67px;background:#A3A3A3"></div>
<div class="a" style="left:232px;top:319px;width:46px;height:1px;background:#A3A3A3"></div>
<div class="a" style="left:227px;top:241px;width:11px;height:11px;border:1px solid #B0B0B0;border-radius:1px;background:#fff"></div>
<div class="a" style="left:229px;top:246px;width:7px;height:1px;background:#333"></div>
<div class="a" style="left:232px;top:370px;width:1px;height:337px;background:#A3A3A3"></div>
<div class="a" style="left:232px;top:707px;width:46px;height:1px;background:#A3A3A3"></div>
<div class="a" style="left:227px;top:359px;width:11px;height:11px;border:1px solid #B0B0B0;border-radius:1px;background:#fff"></div>
<div class="a" style="left:229px;top:364px;width:7px;height:1px;background:#333"></div>
<div class="a" style="left:245px;top:438px;width:1px;height:256px;background:#A3A3A3"></div>
<div class="a" style="left:245px;top:694px;width:33px;height:1px;background:#A3A3A3"></div>
<div class="a" style="left:240px;top:427px;width:11px;height:11px;border:1px solid #B0B0B0;border-radius:1px;background:#fff"></div>
<div class="a" style="left:242px;top:432px;width:7px;height:1px;background:#333"></div>
<div class="a" style="left:258px;top:453px;width:1px;height:241px;background:#A3A3A3"></div>
<div class="a" style="left:253px;top:442px;width:11px;height:11px;border:1px solid #B0B0B0;border-radius:1px;background:#fff"></div>
<div class="a" style="left:255px;top:447px;width:7px;height:1px;background:#333"></div>
<div class="a" style="left:1478px;top:481px;width:70px;height:22px;border:2px solid #F5C518"></div>
<svg class="a" style="left:1889px;top:203px" width="8" height="6" viewBox="0 0 8 6"><path d="M1 5 H7 L4 1 Z" fill="#BDBDBD"/></svg>
<div class="a" style="left:1889px;top:218px;width:8px;height:764px;border-radius:4px;background:#999"></div>
<svg class="a" style="left:1889px;top:991px" width="8" height="6" viewBox="0 0 8 6"><path d="M1 1 H7 L4 5 Z" fill="#4D4D4D"/></svg>
<svg class="a" style="left:232px;top:1008px" width="6" height="8" viewBox="0 0 6 8"><path d="M5 1 V7 L1 4 Z" fill="#BDBDBD"/></svg>
<div class="a" style="left:247px;top:1008px;width:1616px;height:8px;border-radius:4px;background:#D6D6D6"></div>
<div class="a" style="left:247px;top:1008px;width:1038px;height:8px;border-radius:4px;background:#999"></div>
<svg class="a" style="left:1872px;top:1008px" width="6" height="8" viewBox="0 0 6 8"><path d="M1 1 V7 L5 4 Z" fill="#4D4D4D"/></svg>

<!-- REPORT END -->
</body></html>
